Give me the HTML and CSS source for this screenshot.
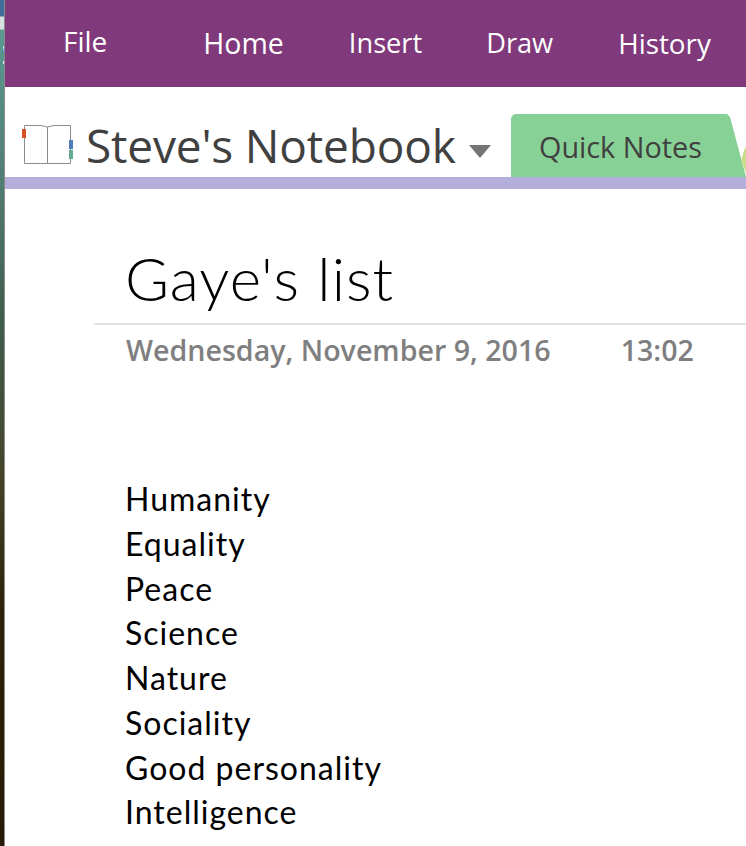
FILE: index.html
```html
<!DOCTYPE html>
<html lang="en">
<head>
<meta charset="utf-8">
<title>Gaye's list</title>
<link rel="stylesheet" href="styles.css">
</head>
<body>
<div class="desktop-edge"></div>
<div class="app">
  <nav class="ribbon">
    <span class="file">File</span>
    <span class="tab t-home">Home</span>
    <span class="tab t-insert">Insert</span>
    <span class="tab t-draw">Draw</span>
    <span class="tab t-history">History</span>
  </nav>
  <header class="notebar">
    <svg class="book" width="52" height="44" viewBox="0 0 52 44">
      <path d="M3.5 3.5 H20 L26.5 5 L33 3.5 H49.5 V41.5 H3.5 Z" fill="#fff" stroke="#8c8c8c" stroke-width="1"/>
      <path d="M26.5 5 V41.5" stroke="#8c8c8c" stroke-width="1" fill="none"/>
      <rect x="1" y="7" width="4" height="9" fill="#d9512c"/>
      <rect x="48" y="18" width="4" height="9" fill="#4a7eb5"/>
      <rect x="48" y="28" width="4" height="9" fill="#64ab94"/>
    </svg>
    <span class="nbname">Steve's Notebook</span>
    <span class="caret"></span>
    <div class="section">Quick Notes</div>
    <span class="next-tab"></span>
  </header>
  <div class="band"></div>
  <main class="page">
    <h1 class="title">Gaye's list</h1>
    <div class="rule"></div>
    <div class="stamp"><span>Wednesday, November 9, 2016</span><span class="time">13:02</span></div>
    <ul class="list">
      <li>Humanity</li>
      <li>Equality</li>
      <li>Peace</li>
      <li>Science</li>
      <li>Nature</li>
      <li>Sociality</li>
      <li>Good personality</li>
      <li>Intelligence</li>
    </ul>
  </main>
</div>
</body>
</html>
```
FILE: styles.css
```css
* { box-sizing: border-box; }
html, body { margin: 0; height: 846px; overflow: hidden; background: #fff; }
body { display: flex; font-family: "Open Sans", "Noto Sans", sans-serif; }
.desktop-edge {
  width: 5px; flex: none;
  border-right: 1px solid #8a8a8a;
  background:
    linear-gradient(#e8f2f6, #1f6fd0) 3px 46px / 1px 7px no-repeat,
    linear-gradient(#e8f2f6, #e8f2f6) 3px 61px / 1px 3px no-repeat,
    linear-gradient(#3f6d9c 0, #3f6d9c 16px, #d8dfe0 17px, #d8dfe0 29px, #5a9a90 30px, #50796f 200px, #3f5d4c 320px, #45452a 470px, #2c2208 610px, #261c06 100%);
}
.app { flex: 1; min-width: 0; display: flex; flex-direction: column; }
.ribbon {
  height: 87px; background: #80397b; color: #fff;
  display: flex; align-items: flex-start;
  font-size: 27.2px; line-height: 36px;
}
.file { margin: 23px 0 0 58px; font-size: 28px; }
.tab { margin-top: 25px; }
.t-home { margin-left: 96px; font-size: 28.5px; }
.t-insert { margin-left: 65px; }
.t-draw { margin-left: 64px; }
.t-history { margin-left: 65px; font-size: 27.8px; }
.notebar { height: 90px; display: flex; align-items: flex-start; position: relative; overflow: hidden; }
.book { flex: none; margin: 35px 0 0 16px; }
.nbname { margin: 27px 0 0 13px; font-size: 46px; line-height: 62px; color: #404040; white-space: nowrap; letter-spacing: -0.17px; }
.caret { margin: 58px 0 0 13px; width: 0; height: 0; border-left: 11px solid transparent; border-right: 11px solid transparent; border-top: 13px solid #757575; }
.section {
  position: absolute; left: 506px; top: 27px; width: 235px; height: 63px;
  background: #88d196;
  clip-path: polygon(0 4px, 1.5px 1.5px, 4px 0, 216px 0, 219px 3px, 235px 63px, 0 63px);
  font-size: 28.8px; line-height: 66px; color: #404040; padding-left: 28px; white-space: nowrap;
}
.next-tab { position: absolute; left: 736px; top: 56px; width: 10px; height: 34px; background: #c9dd8b; clip-path: polygon(100% 0, 100% 100%, 65% 100%, 0 50%, 40% 15%); }
.band { height: 12px; background: #b4aedb; flex: none; }
.page { flex: 1; padding: 0; }
.title { margin: 50px 0 0 120px; font-family: "Lato", "Open Sans", sans-serif; font-weight: 300; font-size: 60px; line-height: 78px; letter-spacing: 1px; color: #000; }
.rule { height: 2px; background: #e2e2e2; margin: 6px 0 0 89px; }
.stamp { margin: 7px 0 0 121px; display: flex; font-size: 28.6px; line-height: 36px; color: #7f7f7f; font-family: "Open Sans", sans-serif; font-weight: 600; }
.time { margin-left: 70px; }
.list { list-style: none; margin: 109px 0 0 120px; padding: 0; font-family: "Lato", "Open Sans", sans-serif; font-size: 32px; line-height: 44.75px; letter-spacing: 1px; color: #000; }
```
